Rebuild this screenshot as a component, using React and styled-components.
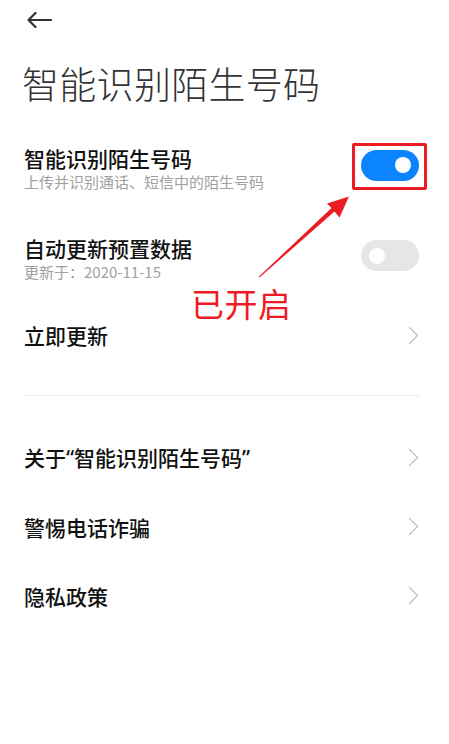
import styled, { createGlobalStyle } from "styled-components";

const GlobalStyle = createGlobalStyle`
  html, body {
    margin: 0;
    padding: 0;
    background: #fff;
  }
  body {
    font-family: "Noto Sans CJK SC", "Noto Sans", sans-serif;
    -webkit-font-smoothing: antialiased;
  }
`;

const Page = styled.div`
  position: relative;
  width: 449px;
  height: 744px;
  overflow: hidden;
  background: #fff;
`;

const TopBar = styled.div`
  height: 40px;
  display: flex;
  align-items: center;
  padding-left: 26px;
  color: #333;
`;

const Heading = styled.h1`
  margin: 21px 0 0;
  padding-left: 22px;
  height: 44px;
  line-height: 44px;
  font-size: 37px;
  font-weight: 300;
  color: #333;
  letter-spacing: 0.3px;
`;

const List = styled.div`
  display: flex;
  flex-direction: column;
  padding: 0 30px 0 24px;
`;

const Row = styled.div`
  display: flex;
  align-items: center;
  justify-content: space-between;
  height: ${(p) => p.$h}px;
  margin-top: ${(p) => p.$top || 0}px;
`;

const TextBlock = styled.div`
  display: flex;
  flex-direction: column;
`;

const Title = styled.div`
  font-size: 21px;
  line-height: 26px;
  font-weight: 500;
  color: #111;
`;

/* half-width curly quotes, as the system font draws them */
const Quote = styled.span`
  font-family: "Noto Sans", "Liberation Sans", sans-serif;
  font-weight: 500;
`;

const Sub = styled.div`
  font-size: 15px;
  line-height: 21px;
  color: #a0a0a0;
`;

const Divider = styled.div`
  height: 1px;
  background: #ececec;
  margin: 28px -1px 0 -1px;
`;

const SwitchWrap = styled.div`
  position: relative;
  margin-bottom: ${(p) => p.$lift || 0}px;
`;

const Track = styled.div`
  width: 58px;
  height: 31px;
  border-radius: 16px;
  background: ${(p) => (p.$on ? "#0d84ff" : "#e6e6e6")};
  display: flex;
  align-items: center;
  justify-content: ${(p) => (p.$on ? "flex-end" : "flex-start")};
  padding: 0 8px;
  box-sizing: border-box;
`;

const Knob = styled.span`
  width: 16px;
  height: 16px;
  border-radius: 50%;
  background: #fff;
`;

const Highlight = styled.div`
  position: absolute;
  left: -9px;
  top: -7px;
  right: -8px;
  bottom: -9px;
  border: 3px solid #ec1c24;
  border-radius: 2px;
`;

const Pointer = styled.svg`
  position: absolute;
  left: 0;
  top: 0;
  pointer-events: none;
`;

const Label = styled.div`
  position: absolute;
  left: 191px;
  top: 281px;
  font-size: 33px;
  line-height: 44px;
  color: #ef1a24;
  letter-spacing: 0.5px;
`;

const BackArrow = () => (
  <svg width="26" height="18" viewBox="0 0 26 18">
    <path
      d="M25 9H2.5M9.5 2L2.5 9l7 7"
      fill="none"
      stroke="#333"
      strokeWidth="2.2"
      strokeLinecap="round"
      strokeLinejoin="round"
    />
  </svg>
);

const Chevron = () => (
  <svg width="11" height="19" viewBox="0 0 11 19">
    <path
      d="M1.5 1.5l8 8-8 8"
      fill="none"
      stroke="#c2c2c2"
      strokeWidth="1.4"
      strokeLinecap="round"
      strokeLinejoin="round"
    />
  </svg>
);

const Switch = ({ on, lift, marked }) => (
  <SwitchWrap $lift={lift}>
    <Track $on={on}>
      <Knob />
    </Track>
    {marked && <Highlight />}
  </SwitchWrap>
);

const links = [
  <>
    关于<Quote>“</Quote>智能识别陌生号码<Quote>”</Quote>
  </>,
  "警惕电话诈骗",
  "隐私政策",
];

export default function App() {
  return (
    <Page>
      <GlobalStyle />
      <TopBar>
        <BackArrow />
      </TopBar>
      <Heading>智能识别陌生号码</Heading>

      <List>
        <Row $h={90} $top={18}>
          <TextBlock>
            <Title>智能识别陌生号码</Title>
            <Sub>上传并识别通话、短信中的陌生号码</Sub>
          </TextBlock>
          <Switch on lift={6} marked />
        </Row>
        <Row $h={90}>
          <TextBlock>
            <Title>自动更新预置数据</Title>
            <Sub>更新于：2020-11-15</Sub>
          </TextBlock>
          <Switch lift={5} />
        </Row>
        <Row $h={64}>
          <Title>立即更新</Title>
          <Chevron />
        </Row>

        <Divider />

        {links.map((t, i) => (
          <Row key={i} $h={69} $top={i === 0 ? 27 : 0}>
            <Title>{t}</Title>
            <Chevron />
          </Row>
        ))}
      </List>

      <Pointer width="449" height="744" viewBox="0 0 449 744">
        <polygon
          points="259.5,277.5 334.5,211.5 339.5,217.5 349,196.5 327,203.5 331.5,208 259,276.5"
          fill="#ec1c24"
        />
      </Pointer>
      <Label>已开启</Label>
    </Page>
  );
}
